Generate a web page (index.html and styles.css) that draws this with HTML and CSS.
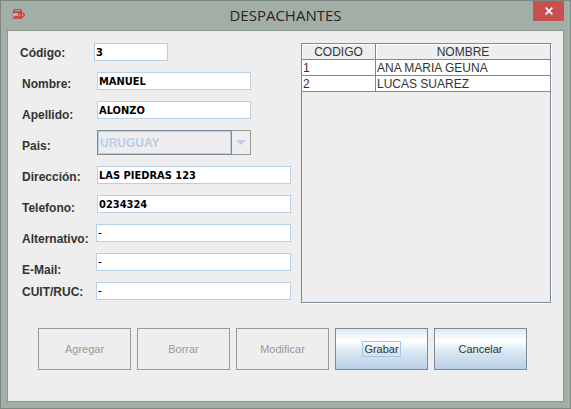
FILE: index.html
```html
<!DOCTYPE html>
<html lang="es">
<head>
<meta charset="utf-8">
<title>Despachantes</title>
<link rel="stylesheet" href="styles.css">
</head>
<body>
<div class="window">
  <header class="titlebar">
    <svg class="app-icon" width="13" height="12" viewBox="0 0 13 12" aria-hidden="true">
      <path fill="#cc4a46" d="M2 1h7v1h1v3H1V2h1z"/>
      <path fill="#8b9a98" d="M0 4h1v5H0z"/>
      <path fill="#b0b5ac" d="M1 5h5v3H1z"/>
      <path fill="#cc4a46" d="M1 9h1V8h8v3H1z"/>
      <path fill="#cc4a46" d="M6 5h4V4h1v1h1v1h1v2h-1v1h-1v1H7V9H6z"/>
      <path fill="#b9aaa2" d="M3 2h5v1H3zM7 6h1v2H7zM10 6h1v2h-1z"/>
    </svg>
    <h1 class="title">DESPACHANTES</h1>
    <button class="close" type="button" aria-label="Cerrar">
      <svg width="8" height="8" viewBox="0 0 8 8" aria-hidden="true"><path d="M.7 .7l6.6 6.6M7.3 .7L.7 7.3" stroke="#fff" stroke-width="1.7"/></svg>
    </button>
  </header>
  <main class="client">
    <div class="content">
      <form class="form">
        <div class="labels">
          <label class="first" for="codigo">Código:</label>
          <label for="nombre">Nombre:</label>
          <label for="apellido">Apellido:</label>
          <label for="pais">Pais:</label>
          <label for="direccion">Dirección:</label>
          <label for="telefono">Telefono:</label>
          <label for="alternativo">Alternativo:</label>
          <label for="email">E-Mail:</label>
          <label class="tight" for="cuit">CUIT/RUC:</label>
        </div>
        <div class="fields">
          <input class="field short" id="codigo" type="text" value="3">
          <input class="field medium" id="nombre" type="text" value="MANUEL">
          <input class="field medium" id="apellido" type="text" value="ALONZO">
          <div class="combo">
            <select id="pais" disabled><option>URUGUAY</option></select>
            <span class="arrow"><svg width="10" height="5" viewBox="0 0 10 5" aria-hidden="true"><path fill="#b8cfe5" d="M0 0h10L5 5z"/></svg></span>
          </div>
          <input class="field" id="direccion" type="text" value="LAS PIEDRAS 123">
          <input class="field" id="telefono" type="text" value="0234324">
          <input class="field wide" id="alternativo" type="text" value="-">
          <input class="field wide" id="email" type="text" value="-">
          <input class="field wide" id="cuit" type="text" value="-">
        </div>
      </form>
      <div class="list">
        <table>
          <thead><tr><th class="code">CODIGO</th><th>NOMBRE</th></tr></thead>
          <tbody>
            <tr><td>1</td><td>ANA MARIA GEUNA</td></tr>
            <tr><td>2</td><td>LUCAS SUAREZ</td></tr>
          </tbody>
        </table>
      </div>
    </div>
    <div class="actions">
      <button type="button" disabled><span>Agregar</span></button>
      <button type="button" disabled><span>Borrar</span></button>
      <button type="button" disabled><span>Modificar</span></button>
      <button type="button"><span class="focus">Grabar</span></button>
      <button type="button"><span>Cancelar</span></button>
    </div>
  </main>
</div>
</body>
</html>
```
FILE: styles.css
```css
* { box-sizing: border-box; }

body {
  margin: 0;
  font: 12px "Liberation Sans", Arial, sans-serif;
  color: #333;
}

.window {
  display: flex;
  flex-direction: column;
  min-height: 100vh;
  padding: 0 6px 6px;
  border: 1px solid #7d8881;
  background: #a2afa6;
}

.titlebar {
  display: grid;
  grid-template-columns: 31px 1fr 31px;
  height: 29px;
}

.app-icon { margin: 7px 0 0 5px; }

.title {
  margin: 0;
  font: 15px/29px "Open Sans", "Segoe UI", sans-serif;
  text-align: center;
  color: #2b2226;
}

.close {
  display: flex;
  align-items: center;
  justify-content: center;
  height: 20px;
  padding: 0;
  border: 0;
  background: #c75050;
}

.client {
  flex: 1;
  display: flex;
  flex-direction: column;
  gap: 25px;
  padding: 12px 12px 31px;
  border: 1px solid #8b978f;
  background: #eee;
}

.content {
  flex: 1;
  display: flex;
  gap: 10px;
}

.form { display: flex; }

.labels {
  display: flex;
  flex-direction: column;
  width: 74px;
  margin-top: -5px;
  padding-left: 2px;
  font-weight: bold;
  line-height: 31px;
}

.labels .first { margin-left: -2px; }
.labels .tight { line-height: 12px; }

.fields {
  display: flex;
  flex-direction: column;
  align-items: flex-end;
  gap: 11px;
  width: 197px;
}

.field {
  width: 194px;
  height: 18px;
  padding: 0 1px;
  border: 1px solid #b8cfe5;
  background: #fff;
  color: #000;
  font: bold 11px "DejaVu Sans Condensed", Tahoma, sans-serif;
}

.field.wide { width: 195px; font-size: 12px; font-weight: normal; }
.field.medium { width: 154px; margin-right: 40px; }
.field.short { width: 74px; align-self: flex-start; }

.combo {
  display: flex;
  width: 154px;
  height: 25px;
  margin-right: 40px;
}

.combo select {
  flex: 1;
  appearance: none;
  padding: 0 2px;
  border: 1px solid #7a8a99;
  border-radius: 0;
  outline: 1px solid #b8cfe5;
  outline-offset: -2px;
  background: #eee;
  color: #b8cfe5;
  font: bold 12px "Liberation Sans", Arial, sans-serif;
  opacity: 1;
}

.combo .arrow {
  display: flex;
  align-items: center;
  justify-content: center;
  width: 19px;
  border: 1px solid #999;
  border-left: 0;
}

.list {
  flex: 1;
  border: 1px solid #7a8a99;
  box-shadow: 1px 1px #fff;
}

table {
  width: 100%;
  table-layout: fixed;
  border-collapse: separate;
  border-spacing: 0;
}

th, td {
  height: 16px;
  padding: 2px 1px 0;
  border-right: 1px solid #7a8a99;
  border-bottom: 1px solid #7a8a99;
  line-height: 13px;
  font-weight: normal;
  text-align: left;
  white-space: nowrap;
}

th {
  box-shadow: inset 1px 1px #fff;
  text-align: center;
}

th:last-child, td:last-child { border-right: 0; }
th.code { width: 74px; }
td { background: #fff; }

.actions {
  display: flex;
  gap: 6px;
  padding-left: 18px;
}

.actions button {
  width: 93px;
  height: 42px;
  padding: 0;
  border: 1px solid #7a8a99;
  background: linear-gradient(#dde8f3 0%, #fff 30%, #dce8f2 55%, #b8cfe5 100%);
  color: #333;
  font: 11px "Liberation Sans", Arial, sans-serif;
}

.actions button:disabled {
  border-color: #999;
  background: #eee;
  color: #999;
}

.focus { outline: 1px solid #a3c4e5; outline-offset: 1px; }
```
